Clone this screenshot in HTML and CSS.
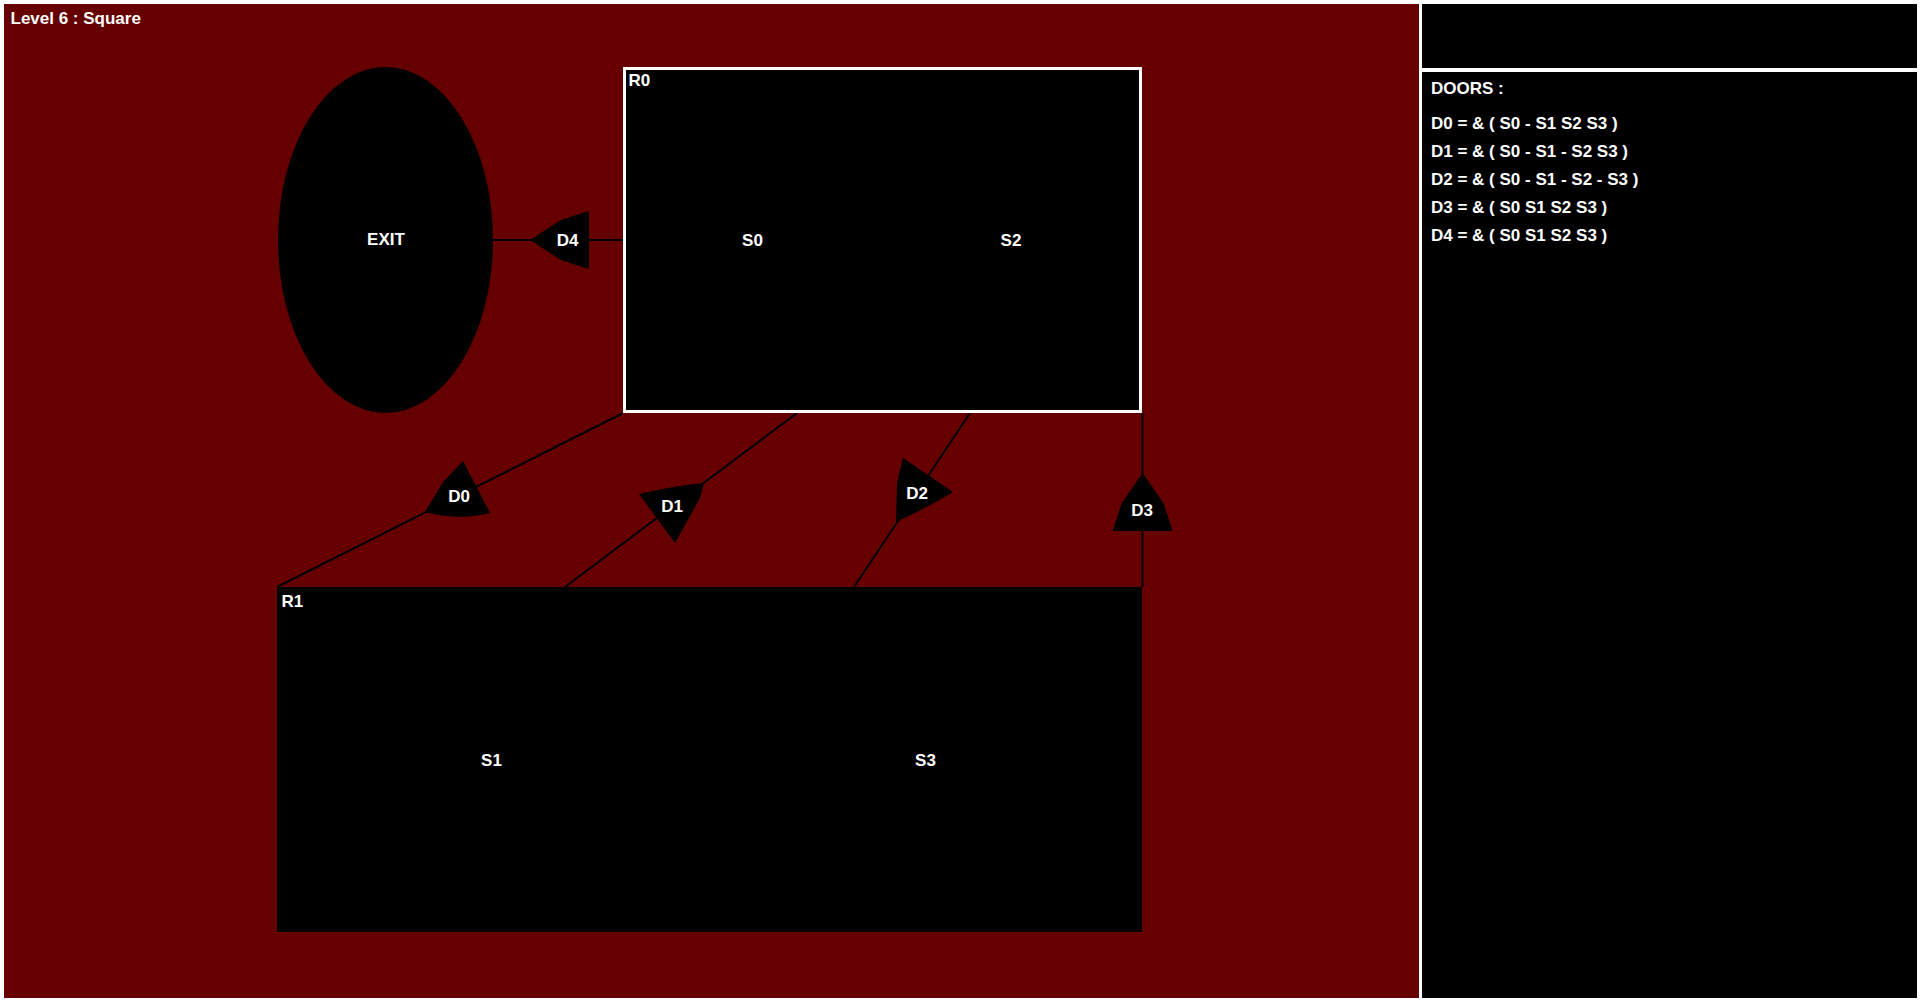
FILE: index.html
```html
<!DOCTYPE html>
<html lang="en">
<head>
<meta charset="utf-8">
<title>Level 6 : Square</title>
<link rel="stylesheet" href="styles.css">
</head>
<body>
<div class="app">
  <div class="canvas">
    <svg class="map" width="1415" height="994" viewBox="4 4 1415 994" xmlns="http://www.w3.org/2000/svg">
      <text class="title" x="10.5" y="24">Level 6 : Square</text>
      <g class="links">
        <path d="M493 240 H623"/>
        <path d="M277 587 L623 413"/>
        <path d="M565 587 L797 413"/>
        <path d="M854 587 L970 413"/>
        <path d="M1142.5 413 V587"/>
      </g>
      <rect class="room current" x="624.5" y="68.5" width="516" height="343"/>
      <rect class="room" x="277" y="587" width="865" height="345"/>
      <ellipse class="exit" cx="385.5" cy="240" rx="107.5" ry="173"/>
      <g class="doors">
        <path d="M463 461 L443 482 L425 512 Q458 521 490 513 Z"/>
        <path d="M639 494 Q672 486 704 483 L700 498 L675 543 Z"/>
        <path d="M903 458 L953 492 Q925 509 896 522 L897 483 Z"/>
        <path d="M1142.7 473 L1121.7 503 L1112.7 531 L1172.7 531 L1163.3 503 Z"/>
        <path d="M530 240 L561 220 L589 211 L589 269 L561 260 Z"/>
      </g>
      <g class="labels">
        <text x="628.5" y="86">R0</text>
        <text x="281.5" y="607">R1</text>
        <text class="mid" x="386" y="244.5">EXIT</text>
        <text class="mid" x="752.5" y="246">S0</text>
        <text class="mid" x="1011" y="246">S2</text>
        <text class="mid" x="491.5" y="766">S1</text>
        <text class="mid" x="925.5" y="766">S3</text>
        <text class="mid" x="459" y="502">D0</text>
        <text class="mid" x="672" y="512">D1</text>
        <text class="mid" x="917" y="498.5">D2</text>
        <text class="mid" x="1142" y="516">D3</text>
        <text class="mid" x="567.5" y="246">D4</text>
      </g>
    </svg>
  </div>
  <div class="side">
    <div class="side-top"></div>
    <div class="side-main">
      <div class="doors-title">DOORS :</div>
      <div class="door-line">D0 = &amp; ( S0 - S1 S2 S3 )</div>
      <div class="door-line">D1 = &amp; ( S0 - S1 - S2 S3 )</div>
      <div class="door-line">D2 = &amp; ( S0 - S1 - S2 - S3 )</div>
      <div class="door-line">D3 = &amp; ( S0 S1 S2 S3 )</div>
      <div class="door-line">D4 = &amp; ( S0 S1 S2 S3 )</div>
    </div>
  </div>
</div>
</body>
</html>
```
FILE: styles.css
```css
html, body {
  margin: 0;
  padding: 0;
  background: #ffffff;
  height: 1001px;
  overflow: hidden;
}
.app {
  display: flex;
  gap: 3px;
  padding: 4px 3px 3px 4px;
  height: 1001px;
  box-sizing: border-box;
}
.canvas {
  width: 1415px;
  flex: none;
  background: #660000;
  overflow: hidden;
}
.map {
  display: block;
  font-family: "Liberation Sans", Arial, sans-serif;
  font-weight: bold;
}
.title {
  fill: #ffffff;
  font-size: 17px;
}
.links path {
  fill: none;
  stroke: #000000;
  stroke-width: 2;
}
.room {
  fill: #000000;
}
.room.current {
  stroke: #ffffff;
  stroke-width: 3;
}
.exit {
  fill: #000000;
}
.doors path {
  fill: #000000;
}
.labels text {
  fill: #ffffff;
  font-size: 17px;
}
.labels text.mid {
  text-anchor: middle;
}
.side {
  flex: 1;
  display: flex;
  flex-direction: column;
  gap: 4px;
}
.side-top {
  height: 64px;
  background: #000000;
}
.side-main {
  flex: 1;
  background: #000000;
  padding: 3px 9px;
  color: #ffffff;
  font-family: "Liberation Sans", Arial, sans-serif;
  font-weight: bold;
  font-size: 17px;
}
.doors-title {
  line-height: 28px;
  margin-bottom: 7px;
}
.door-line {
  line-height: 28px;
}
```
